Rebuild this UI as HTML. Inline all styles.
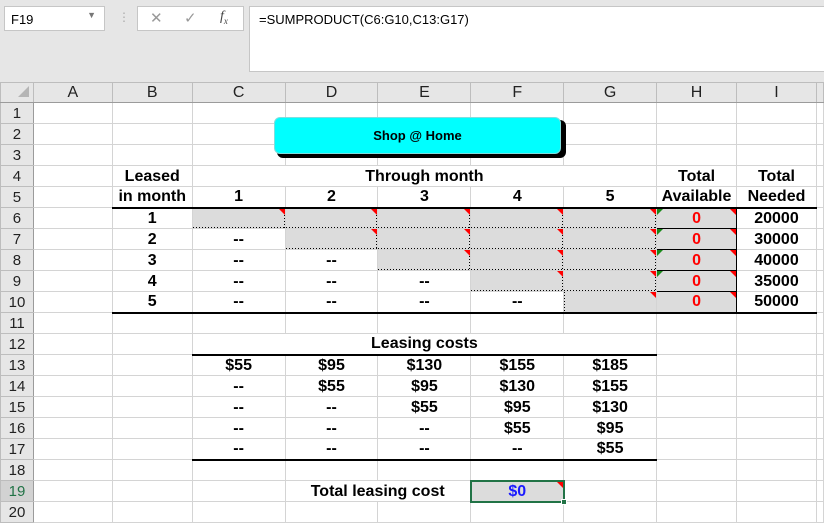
<!DOCTYPE html>
<html><head><meta charset="utf-8"><style>
*{box-sizing:border-box;margin:0;padding:0}
body{width:824px;height:505px;overflow:hidden;background:#fff;font-family:"Liberation Sans",Arial,sans-serif;position:relative}
.top{position:absolute;left:0;top:0;width:824px;height:82px;background:#e6e6e6}
.box{position:absolute;background:#fff;border:1px solid #c6c6c6}
table{position:absolute;left:0;top:82px;border-collapse:collapse;table-layout:fixed}
td{height:21px;border:1px solid #d4d4d4;text-align:center;font-weight:bold;font-size:16px;padding:0;position:relative;white-space:nowrap;overflow:visible;line-height:19px}
tr.h td{height:19px;background:#e6e6e6;font-weight:normal;font-size:16px;color:#222;border-color:#bdbdbd;border-bottom:1px solid #9b9b9b}
td.rh{background:#e6e6e6;font-weight:normal;font-size:15px;color:#222;border-color:#bdbdbd;border-right:1px solid #9b9b9b;text-align:center}
td.sel{background:#d2d2d2;color:#217346}
.g{background-color:#dcdcdc}
.d{background-image:repeating-linear-gradient(to bottom,#000 0 1px,transparent 1px 3px),repeating-linear-gradient(to right,#000 0 1px,transparent 1px 3px);background-size:1px 100%,100% 1px;background-position:right top,left bottom;background-repeat:no-repeat}
.dl{background-image:repeating-linear-gradient(to bottom,#000 0 1px,transparent 1px 3px);background-size:1px 100%;background-position:left top;background-repeat:no-repeat}
.s{border:1px solid #000!important}
.tr::after{content:"";position:absolute;right:0;top:0;border-top:6px solid #f00;border-left:6px solid transparent}
.tl::before{content:"";position:absolute;left:0;top:0;border-top:6px solid #1a8a1a;border-right:6px solid transparent}
.red{color:#f00}
.bb{border-bottom:2px solid #000!important}
</style></head><body>
<div class="top">
 <div class="box" style="left:4px;top:6px;width:101px;height:25px;font-size:13px;padding:5px 0 0 6px">F19<span style="position:absolute;right:8px;top:3px;font-size:9px;color:#777">▼</span></div>
 <div style="position:absolute;left:118px;top:10px;color:#aaa;font-size:12px">⋮</div>
 <div class="box" style="left:137px;top:6px;width:107px;height:25px;color:#999;font-size:15px">
  <span style="position:absolute;left:12px;top:2px">✕</span><span style="position:absolute;left:46px;top:2px">✓</span><span style="position:absolute;left:82px;top:2px;font-style:italic;font-family:'Liberation Serif',serif;color:#444;font-size:14px">f<sub style="font-size:9px">x</sub></span></div>
 <div class="box" style="left:249px;top:6px;width:580px;height:66px;font-size:13px;padding:5px 0 0 9px">=SUMPRODUCT(C6:G10,C13:G17)</div>
</div>
<table>
<colgroup><col style="width:33px"><col style="width:79px"><col style="width:80px"><col style="width:93px"><col style="width:93px"><col style="width:93px"><col style="width:93px"><col style="width:93px"><col style="width:80px"><col style="width:80px"><col style="width:7px"></colgroup>
<tr class="h"><td></td><td>A</td><td>B</td><td>C</td><td>D</td><td>E</td><td class="sel" style="color:#222">F</td><td>G</td><td>H</td><td>I</td><td></td></tr>
<tr><td class="rh">1</td><td></td><td></td><td></td><td></td><td></td><td></td><td></td><td></td><td></td><td></td></tr>
<tr><td class="rh">2</td><td></td><td></td><td></td><td></td><td></td><td></td><td></td><td></td><td></td><td></td></tr>
<tr><td class="rh">3</td><td></td><td></td><td></td><td></td><td></td><td></td><td></td><td></td><td></td><td></td></tr>
<tr><td class="rh">4</td><td></td><td>Leased</td><td colspan="5">Through month</td><td>Total</td><td>Total</td><td></td></tr>
<tr><td class="rh">5</td><td></td><td class="bb">in month</td><td class="bb">1</td><td class="bb">2</td><td class="bb">3</td><td class="bb">4</td><td class="bb">5</td><td class="bb">Available</td><td class="bb">Needed</td><td></td></tr>
<tr><td class="rh">6</td><td></td><td>1</td><td class="g d tr"></td><td class="g d tr"></td><td class="g d tr"></td><td class="g d tr"></td><td class="g d tr"></td><td class="g s tr tl red">0</td><td>20000</td><td></td></tr>
<tr><td class="rh">7</td><td></td><td>2</td><td>--</td><td class="g d tr"></td><td class="g d tr"></td><td class="g d tr"></td><td class="g d tr"></td><td class="g s tr tl red">0</td><td>30000</td><td></td></tr>
<tr><td class="rh">8</td><td></td><td>3</td><td>--</td><td>--</td><td class="g d tr"></td><td class="g d tr"></td><td class="g d tr"></td><td class="g s tr tl red">0</td><td>40000</td><td></td></tr>
<tr><td class="rh">9</td><td></td><td>4</td><td>--</td><td>--</td><td>--</td><td class="g d tr"></td><td class="g d tr"></td><td class="g s tr tl red">0</td><td>35000</td><td></td></tr>
<tr><td class="rh">10</td><td></td><td class="bb">5</td><td class="bb">--</td><td class="bb">--</td><td class="bb">--</td><td class="bb">--</td><td class="g dl tr bb"></td><td class="g s tr red bb">0</td><td class="bb">50000</td><td></td></tr>
<tr><td class="rh">11</td><td></td><td></td><td></td><td></td><td></td><td></td><td></td><td></td><td></td><td></td></tr>
<tr><td class="rh">12</td><td></td><td></td><td colspan="5" class="bb">Leasing costs</td><td></td><td></td><td></td></tr>
<tr><td class="rh">13</td><td></td><td></td><td>$55</td><td>$95</td><td>$130</td><td>$155</td><td>$185</td><td></td><td></td><td></td></tr>
<tr><td class="rh">14</td><td></td><td></td><td>--</td><td>$55</td><td>$95</td><td>$130</td><td>$155</td><td></td><td></td><td></td></tr>
<tr><td class="rh">15</td><td></td><td></td><td>--</td><td>--</td><td>$55</td><td>$95</td><td>$130</td><td></td><td></td><td></td></tr>
<tr><td class="rh">16</td><td></td><td></td><td>--</td><td>--</td><td>--</td><td>$55</td><td>$95</td><td></td><td></td><td></td></tr>
<tr><td class="rh">17</td><td></td><td></td><td class="bb">--</td><td class="bb">--</td><td class="bb">--</td><td class="bb">--</td><td class="bb">$55</td><td></td><td></td><td></td></tr>
<tr><td class="rh">18</td><td></td><td></td><td></td><td></td><td></td><td></td><td></td><td></td><td></td><td></td></tr>
<tr><td class="rh sel">19</td><td></td><td></td><td></td><td colspan="2">Total leasing cost</td><td class="g tr" style="border:2px solid #217346;color:#1a1aff">$0<span style="position:absolute;right:-4px;bottom:-4px;width:6px;height:6px;background:#217346;border:1px solid #fff"></span></td><td></td><td></td><td></td><td></td></tr>
<tr><td class="rh">20</td><td></td><td></td><td></td><td></td><td></td><td></td><td></td><td></td><td></td><td></td></tr>
</table>
<div style="position:absolute;left:274px;top:117px;width:289px;height:38px;background:#000;border-radius:6px;transform:translate(3px,3px)"></div>
<div style="position:absolute;left:274px;top:117px;width:287px;height:37px;background:#00ffff;border-radius:6px;border:1px solid #7fdede;font-weight:bold;font-size:13px;text-align:center;line-height:35px">Shop @ Home</div>
<div style="position:absolute;left:18px;top:86px;width:0;height:0;border-bottom:11px solid #b5b5b5;border-left:11px solid transparent"></div>
</body></html>
